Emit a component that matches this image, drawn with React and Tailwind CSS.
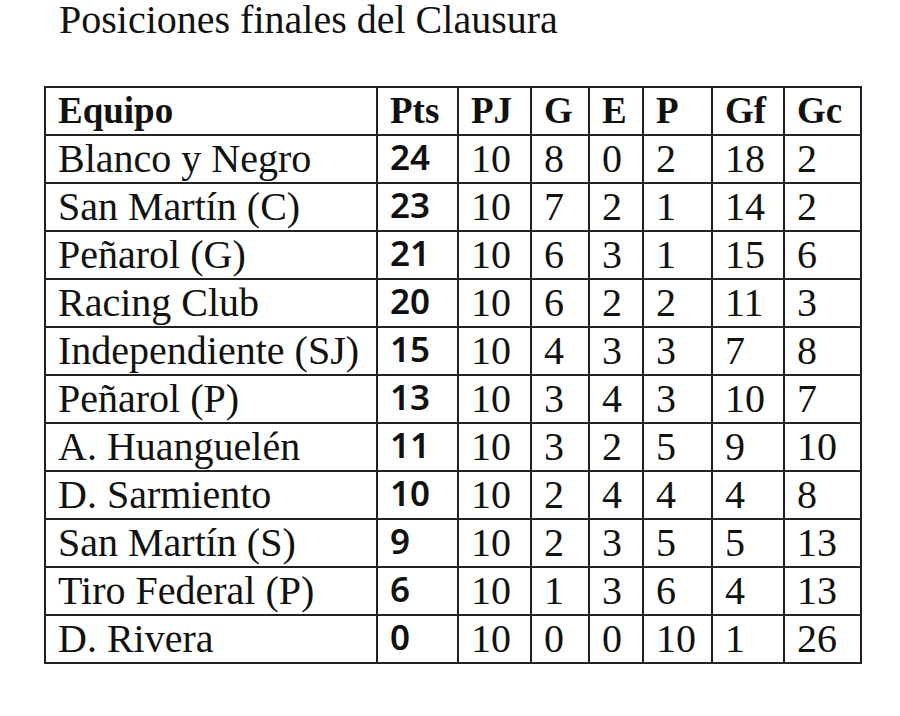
import React from 'react';

const rows = [
    ['Blanco y Negro', 24, 10, 8, 0, 2, 18, 2],
    ['San Martín (C)', 23, 10, 7, 2, 1, 14, 2],
    ['Peñarol (G)', 21, 10, 6, 3, 1, 15, 6],
    ['Racing Club', 20, 10, 6, 2, 2, 11, 3],
    ['Independiente (SJ)', 15, 10, 4, 3, 3, 7, 8],
    ['Peñarol (P)', 13, 10, 3, 4, 3, 10, 7],
    ['A. Huanguelén', 11, 10, 3, 2, 5, 9, 10],
    ['D. Sarmiento', 10, 10, 2, 4, 4, 4, 8],
    ['San Martín (S)', 9, 10, 2, 3, 5, 5, 13],
    ['Tiro Federal (P)', 6, 10, 1, 3, 6, 4, 13],
    ['D. Rivera', 0, 10, 0, 0, 10, 1, 26],
];

const headers = ['Equipo', 'Pts', 'PJ', 'G', 'E', 'P', 'Gf', 'Gc'];

export default function App() {
    return (
        <div className="w-[900px] h-[716px] bg-white font-['Liberation_Serif',serif] text-[40px] text-[#111]">
            <h1 className="pl-[59px] pt-0 leading-[40px] font-normal text-[40px]">
                Posiciones finales del Clausura
            </h1>

            <div className="pl-[44px] pt-[46px]">
                <table className="table-fixed border-collapse border-2 border-[#222] w-[816px]">
                    <colgroup>
                        <col className="w-[332px]" />
                        <col className="w-[81px]" />
                        <col className="w-[73px]" />
                        <col className="w-[58px]" />
                        <col className="w-[54px]" />
                        <col className="w-[69px]" />
                        <col className="w-[72px]" />
                        <col className="w-[77px]" />
                    </colgroup>
                    <thead>
                        <tr>
                            {headers.map(h => (
                                <th key={h} className="border-2 border-[#222] text-left font-bold text-[37px] pl-[12px] h-[48px] leading-[44px] p-0">
                                    {h}
                                </th>
                            ))}
                        </tr>
                    </thead>
                    <tbody>
                        {rows.map(r => (
                            <tr key={r[0]}>
                                {r.map((v, i) => (
                                    <td
                                        key={i}
                                        className={
                                            i === 1
                                                ? "border-2 border-[#222] pl-[12px] pb-[4px] h-[48px] leading-[40px] font-semibold font-['Noto_Sans',sans-serif] text-[35px]"
                                                : "border-2 border-[#222] pl-[12px] h-[48px] leading-[44px] p-0 whitespace-nowrap"
                                        }
                                    >
                                        {v}
                                    </td>
                                ))}
                            </tr>
                        ))}
                    </tbody>
                </table>
            </div>
        </div>
    );
}
